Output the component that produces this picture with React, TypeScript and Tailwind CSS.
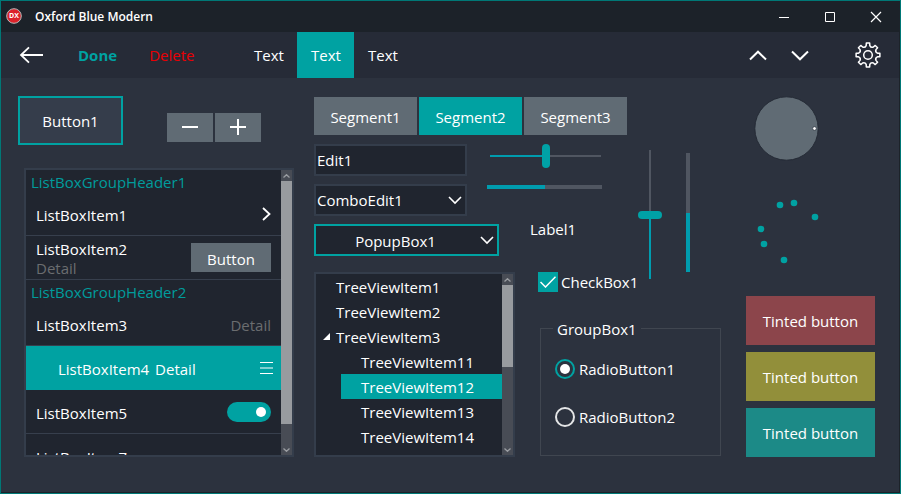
import { useState } from 'react';
import type { ReactNode } from 'react';

type IconProps = {
   d: string,
   className: string,
   viewBox: string,
   stroke?: number,
}

const LineIcon = ({ d, className, viewBox, stroke = 2 }: IconProps) => (
   <svg className={className} viewBox={viewBox} fill='none' stroke='currentColor' strokeWidth={stroke} aria-hidden='true'>
      <path d={d} />
   </svg>
);

// Outline of a cog with eight teeth, centred on 13,13
const gearPath = () => {
   const point = (radius: number, degrees: number) => {
      const angle = (degrees * Math.PI) / 180;
      return `${(13 + radius * Math.cos(angle)).toFixed(2)} ${(13 + radius * Math.sin(angle)).toFixed(2)}`;
   };
   const teeth = Array.from({ length: 8 }, (_, i) => {
      const a = i * 45;
      return `${i === 0 ? 'M' : 'L'}${point(12, a - 8)} L${point(12, a + 8)} L${point(9.6, a + 11)} Q${point(7.6, a + 22.5)} ${point(9.6, a + 34)}`;
   });
   return `${teeth.join(' ')} Z`;
};

const ScrollBar = ({ thumb }: { thumb: string }) => (
   <div className='flex w-[11px] shrink-0 flex-col bg-[#484c55] text-[#9a9da2]' aria-hidden='true'>
      <div className='flex h-[11px] shrink-0 items-center justify-center'>
         <LineIcon className='h-1 w-[7px]' viewBox='0 0 7 4' d='M.5 3.5 3.5.7l3 2.8' stroke={1.3} />
      </div>
      <div className={`bg-[#989b9f] ${thumb}`} />
      <div className='mt-auto flex h-[11px] shrink-0 items-center justify-center'>
         <LineIcon className='h-1 w-[7px]' viewBox='0 0 7 4' d='M.5.5l3 2.8 3-2.8' stroke={1.3} />
      </div>
   </div>
);

const GroupHeader = ({ children }: { children: ReactNode }) => (
   <li className='h-[22px] pl-[5px] pt-px leading-[22px] text-[#009c9c]'>{children}</li>
);

const ListItem = ({ children, selected = false }: { children: ReactNode, selected?: boolean }) => (
   <li className={`flex h-11 items-center justify-between border-b pl-[10px]
      ${selected ? 'border-[#00a2a2] bg-[#00a2a2] pr-2' : 'border-[#373f4d] pr-[10px]'}`}>
      {children}
   </li>
);

const TitleBar = () => (
   <header className='flex h-[31px] items-center bg-[#1c2229]'>
      <svg className='mb-0.5 ml-[5px] h-4 w-4' viewBox='0 0 16 16' aria-hidden='true'>
         <circle cx='8' cy='8' r='7.3' fill='#dc222a' stroke='#b9b9b9' strokeWidth='1' />
         <text x='8' y='10.3' textAnchor='middle' fontSize='7' fontWeight='700' fill='#fff'>DX</text>
      </svg>
      <h1 className='ml-[13px] text-xs font-semibold'>Oxford Blue Modern</h1>
      <div className='ml-auto mr-px flex h-full'>
         <button type='button' aria-label='Minimize' className='flex w-[46px] items-center justify-center'>
            <LineIcon className='h-3 w-3' viewBox='0 0 12 12' d='M1 6.5h10' stroke={1} />
         </button>
         <button type='button' aria-label='Maximize' className='flex w-[46px] items-center justify-center'>
            <LineIcon className='h-3 w-3' viewBox='0 0 12 12' d='M1.5 1.5h9v9h-9z' stroke={1} />
         </button>
         <button type='button' aria-label='Close' className='flex w-[46px] items-center justify-center'>
            <LineIcon className='h-3 w-3' viewBox='0 0 12 12' d='M1 1l10 10M11 1 1 11' stroke={1.2} />
         </button>
      </div>
   </header>
);

const Toolbar = () => {
   const [tab, setTab] = useState(1);
   return (
      <nav className='flex h-[46px] items-center bg-[#262b37]'>
         <button type='button' aria-label='Back' className='ml-[18px]'>
            <LineIcon className='h-[18px] w-6' viewBox='0 0 24 18' d='M24 9H2M10 1.300 2 9l8 7.700' stroke={1.8} />
         </button>
         <button type='button' className='ml-[35px] font-bold text-[#00a2a2]'>Done</button>
         <button type='button' className='ml-8 text-[#ea0004]'>Delete</button>
         <div className='ml-[46px] flex h-full'>
            {[0, 1, 2].map((i) => (
               <button
                  key={i}
                  type='button'
                  className={`w-[57px] ${tab === i ? 'bg-[#00a2a2]' : ''}`}
                  onClick={() => setTab(i)}
               >
                  Text
               </button>
            ))}
         </div>
         <div className='ml-auto mr-[18px] flex items-center'>
            <button type='button' aria-label='Previous'>
               <LineIcon className='h-[11px] w-[18px]' viewBox='0 0 18 11' d='M1 9.500 9 1.700l8 7.800' />
            </button>
            <button type='button' aria-label='Next' className='ml-6'>
               <LineIcon className='h-[11px] w-[18px]' viewBox='0 0 18 11' d='M1 1.500 9 9.300l8-7.800' />
            </button>
            <button type='button' aria-label='Settings' className='ml-[46px]'>
               <svg className='h-[26px] w-[26px]' viewBox='0 0 26 26' fill='none' stroke='currentColor' strokeWidth='1.5' strokeLinejoin='round'>
                  <path d={gearPath()} />
                  <circle cx='13' cy='13' r='4.300' />
               </svg>
            </button>
         </div>
      </nav>
   );
};

const ListBox = () => (
   <div className='ml-1.5 mt-[23px] flex h-[289px] border-2 border-[#343d4b] bg-[#20252f]'>
      <ul className='flex-1 overflow-hidden'>
         <GroupHeader>ListBoxGroupHeader1</GroupHeader>
         <ListItem>
            <span className='pt-0.5'>ListBoxItem1</span>
            <LineIcon className='h-[14px] w-[9px]' viewBox='0 0 9 14' d='M1 1l6.500 6L1 13' stroke={1.8} />
         </ListItem>
         <ListItem>
            <span className='flex flex-col pt-0.5 leading-[19px]'>
               <span>ListBoxItem2</span>
               <span className='text-[#6b6d70]'>Detail</span>
            </span>
            <button type='button' className='h-[29px] w-20 bg-[#606b74] pt-0.5'>Button</button>
         </ListItem>
         <GroupHeader>ListBoxGroupHeader2</GroupHeader>
         <ListItem>
            <span className='pt-0.5'>ListBoxItem3</span>
            <span className='pt-0.5 text-[#6b6d70]'>Detail</span>
         </ListItem>
         <ListItem selected>
            <span className='flex gap-1.5 pl-[22px] pt-0.5'>
               <span>ListBoxItem4</span>
               <span>Detail</span>
            </span>
            <LineIcon className='h-3 w-[13px]' viewBox='0 0 13 12' d='M0 .5h13M0 6h13M0 11.500h13' stroke={1} />
         </ListItem>
         <ListItem>
            <label htmlFor='item5' className='pt-0.5'>ListBoxItem5</label>
            <span className='relative flex'>
               <input
                  id='item5'
                  type='checkbox'
                  defaultChecked
                  className='peer h-5 w-11 appearance-none rounded-full bg-[#606b74] checked:bg-[#00a2a2]'
               />
               <span className='pointer-events-none absolute left-[5px] top-[5px] h-[10px] w-[10px] rounded-full bg-white peer-checked:left-[29px]' />
            </span>
         </ListItem>
         <ListItem><span className='pt-0.5'>ListBoxItem7</span></ListItem>
      </ul>
      <ScrollBar thumb='h-[243px]' />
   </div>
);

const TREE = [
   { name: 'TreeViewItem1', child: false },
   { name: 'TreeViewItem2', child: false },
   { name: 'TreeViewItem3', child: false, open: true },
   { name: 'TreeViewItem11', child: true },
   { name: 'TreeViewItem12', child: true },
   { name: 'TreeViewItem13', child: true },
   { name: 'TreeViewItem14', child: true },
];

const TreeView = () => {
   const [selected, setSelected] = useState('TreeViewItem12');
   return (
      <div className='flex h-[185px] w-[201px] border-2 border-[#343d4b] bg-[#20252f]'>
         <ul role='tree' className='flex-1 overflow-hidden'>
            {TREE.map(({ name, child, open }) => (
               <li
                  key={name}
                  role='treeitem'
                  aria-selected={selected === name}
                  onClick={() => setSelected(name)}
                  className={`flex h-[25px] items-center ${child ? 'ml-[25px]' : ''} ${selected === name ? 'bg-[#00a2a2]' : ''}`}
               >
                  <span className='flex w-5 shrink-0 justify-center'>
                     {open && (
                        <svg className='h-[7px] w-[7px]' viewBox='0 0 7 7' fill='currentColor' aria-hidden='true'><path d='M7 0v7H0z' /></svg>
                     )}
                  </span>
                  <span>{name}</span>
               </li>
            ))}
         </ul>
         <ScrollBar thumb='h-[82px]' />
      </div>
   );
};

const RadioButton = ({ label, checked = false }: { label: string, checked?: boolean }) => (
   <label className='flex items-center gap-1'>
      <span className='relative flex'>
         <input
            type='radio'
            name='group1'
            defaultChecked={checked}
            className='peer h-5 w-5 appearance-none rounded-full border-2 border-[#e4e5e6] checked:border-[#00a2a2]'
         />
         <span className='pointer-events-none absolute left-[5px] top-[5px] hidden h-[10px] w-[10px] rounded-full bg-white peer-checked:block' />
      </span>
      <span>{label}</span>
   </label>
);

const Fields = () => (
   <div className='col-span-2 flex flex-col gap-2'>
      <div className='flex justify-between'>
         <div className='flex w-[153px] flex-col gap-2'>
            <input
               type='text'
               aria-label='Edit'
               defaultValue='Edit1'
               className='h-8 border-2 border-[#343d4b] bg-[#20252f] pl-px'
            />
            <div className='flex h-8 items-center border-2 border-[#343d4b] bg-[#20252f]'>
               <input type='text' aria-label='Combo edit' defaultValue='ComboEdit1' className='min-w-0 flex-1 pl-px' />
               <button type='button' aria-label='Open list' className='mr-[3px]'>
                  <LineIcon className='h-[9px] w-[14px]' viewBox='0 0 14 9' d='M1 1l6 6 6-6' stroke={1.6} />
               </button>
            </div>
         </div>
         <div className='mr-[35px] flex w-[115px] flex-col'>
            <input
               type='range'
               aria-label='Horizontal track'
               defaultValue={50}
               className='mx-[3px] h-6 w-[111px] appearance-none bg-transparent
                  [&::-webkit-slider-runnable-track]:h-0.5 [&::-webkit-slider-runnable-track]:bg-[linear-gradient(to_right,#009cae_50%,#505661_50%)]
                  [&::-webkit-slider-thumb]:mt-[-11px] [&::-webkit-slider-thumb]:h-6 [&::-webkit-slider-thumb]:w-2
                  [&::-webkit-slider-thumb]:appearance-none [&::-webkit-slider-thumb]:rounded-full [&::-webkit-slider-thumb]:bg-[#00a2a6]'
            />
            <div role='progressbar' aria-label='Progress' aria-valuenow={50} className='mt-[17px] h-1 bg-[#505661]'>
               <div className='h-full w-1/2 bg-[#009cae]' />
            </div>
         </div>
      </div>
      <div className='flex items-start'>
         <div className='relative w-[185px]'>
            <select
               aria-label='Popup box'
               className='block h-8 w-full appearance-none border-2 border-[#00a2a2] bg-[#20252f] pr-[22px] pt-0.5 [text-align-last:center]'
            >
               <option>PopupBox1</option>
            </select>
            <LineIcon className='pointer-events-none absolute right-[5px] top-3 h-[9px] w-[14px]' viewBox='0 0 14 9' d='M1 1l6 6 6-6' stroke={1.6} />
         </div>
         <span className='ml-[31px] leading-[10px]'>Label1</span>
      </div>
   </div>
);

const VerticalTracks = () => (
   <div className='row-span-2 flex items-start pt-1.5'>
      <input
         type='range'
         aria-label='Vertical track'
         defaultValue={50}
         className='ml-px h-[129px] w-6 appearance-none bg-transparent [direction:rtl] [writing-mode:vertical-lr]
            [&::-webkit-slider-runnable-track]:w-0.5 [&::-webkit-slider-runnable-track]:bg-[linear-gradient(to_top,#009cae_50%,#505661_50%)]
            [&::-webkit-slider-thumb]:ml-[-11px] [&::-webkit-slider-thumb]:h-2 [&::-webkit-slider-thumb]:w-6
            [&::-webkit-slider-thumb]:appearance-none [&::-webkit-slider-thumb]:rounded-full [&::-webkit-slider-thumb]:bg-[#00a2a6]'
      />
      <div
         role='progressbar'
         aria-label='Vertical progress'
         aria-valuenow={50}
         className='ml-6 mt-[3px] flex h-[119px] w-1 items-end bg-[#505661]'
      >
         <div className='h-1/2 w-full bg-[#009cae]' />
      </div>
   </div>
);

const SEGMENTS = ['Segment1', 'Segment2', 'Segment3'];

const SPINNER_DOTS = [[23, 9], [37, 7], [58, 21], [4, 33], [7, 48], [27, 64]];

const App = () => {
   const [segment, setSegment] = useState('Segment2');
   return (
      <div className="flex min-h-screen flex-col border border-[#007876] bg-[#2c323e] font-['Open_Sans','Noto_Sans',sans-serif] text-[15px] leading-5 text-white">
         <TitleBar />
         <div className='flex flex-1 flex-col border-b border-r border-[#1c2229]'>
            <Toolbar />
            <main className='flex items-start pl-[17px] pr-6 pt-[18px]'>
               <section className='w-[276px] shrink-0'>
                  <div className='flex items-center'>
                     <button type='button' className='h-[49px] w-[105px] border-2 border-[#00a2a2] bg-[#353d4b]'>Button1</button>
                     <div className='ml-11 mt-[13px] flex gap-0.5'>
                        <button type='button' aria-label='Decrease' className='flex h-[29px] w-[46px] items-center justify-center bg-[#606b74]'>
                           <LineIcon className='h-4 w-4' viewBox='0 0 16 16' d='M0 8h16' />
                        </button>
                        <button type='button' aria-label='Increase' className='flex h-[29px] w-[46px] items-center justify-center bg-[#606b74]'>
                           <LineIcon className='h-4 w-4' viewBox='0 0 16 16' d='M0 8h16M8 0v16' />
                        </button>
                     </div>
                  </div>
                  <ListBox />
               </section>

               <section className='ml-5 mr-[25px] mt-px flex-1'>
                  <div className='flex gap-0.5'>
                     {SEGMENTS.map((name) => (
                        <button
                           key={name}
                           type='button'
                           onClick={() => setSegment(name)}
                           className={`h-[38px] w-[103px] pt-0.5 ${segment === name ? 'bg-[#00a2a2]' : 'bg-[#606b74]'}`}
                        >
                           {name}
                        </button>
                     ))}
                  </div>
                  <div className='mt-[9px] grid grid-cols-[224px_99px_1fr] items-start'>
                     <Fields />
                     <VerticalTracks />
                     <div className='row-span-2 mt-4'><TreeView /></div>
                     <label className='mt-4 flex items-center gap-[3px]'>
                        <span className='relative flex'>
                           <input type='checkbox' defaultChecked className='peer h-5 w-5 appearance-none bg-[#606b74] checked:bg-[#00a2a2]' />
                           <LineIcon
                              className='pointer-events-none absolute left-0.5 top-1 hidden h-3 w-4 peer-checked:block'
                              viewBox='0 0 16 12'
                              d='M.5 6l5 5L15.500.8'
                              stroke={1.5}
                           />
                        </span>
                        <span>CheckBox1</span>
                     </label>
                     <fieldset className='col-span-2 ml-0.5 mt-6 h-[139px] border border-[#404650]'>
                        <legend className='ml-3 px-1 pt-0.5'>GroupBox1</legend>
                        <div className='flex flex-col gap-7 pl-[14px] pt-5'>
                           <RadioButton label='RadioButton1' checked />
                           <RadioButton label='RadioButton2' />
                        </div>
                     </fieldset>
                  </div>
               </section>

               <section className='w-[129px] shrink-0'>
                  <label className='relative ml-2 block h-[65px] w-[65px]'>
                     <input type='range' aria-label='Dial' defaultValue={0} className='sr-only' />
                     <svg viewBox='0 0 65 65' aria-hidden='true'>
                        <circle cx='32.500' cy='32.500' r='31.700' fill='#606b74' stroke='#242a35' />
                        <circle cx='60.500' cy='32.500' r='1.800' fill='#fff' stroke='#242a35' strokeWidth='.6' />
                     </svg>
                  </label>
                  <svg className='ml-[11px] mt-[35px] h-[70px] w-[65px]' viewBox='0 0 65 70' role='img' aria-label='Loading'>
                     {SPINNER_DOTS.map(([x, y]) => <circle key={x} cx={x} cy={y} r='3.300' fill='#00a2a2' />)}
                  </svg>
                  <div className='mt-[30px] flex flex-col gap-[7px]'>
                     <button type='button' className='h-[49px] bg-[#8c454b]'>Tinted button</button>
                     <button type='button' className='h-[49px] bg-[#928f3a]'>Tinted button</button>
                     <button type='button' className='h-[49px] bg-[#1c8a87]'>Tinted button</button>
                  </div>
               </section>
            </main>
         </div>
      </div>
   );
};

export default App;
